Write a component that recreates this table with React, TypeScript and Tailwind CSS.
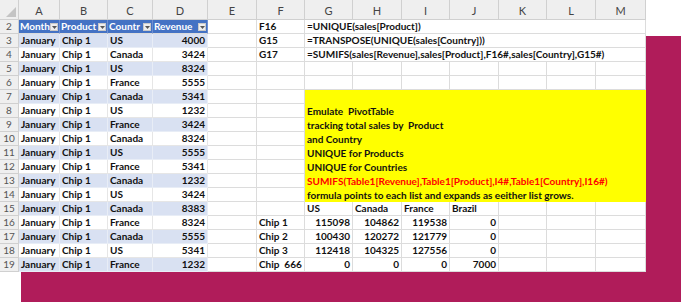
import React from "react";
import clsx from "clsx";

const countries = [
  "US", "Canada", "US", "France", "Canada", "US", "France", "Canada", "US",
  "France", "Canada", "US", "Canada", "France", "Canada", "US", "France",
];
const revenue = [
  4000, 3424, 8324, 5555, 5341, 1232, 3424, 8324, 5555, 5341, 1232, 3424,
  8383, 8324, 5555, 5341, 1232,
];

const letters = ["A", "B", "C", "D", "E", "F", "G", "H", "I", "J", "K", "L", "M"];

const formulas: Record<number, [string, string]> = {
  2: ["F16", "=UNIQUE(sales[Product])"],
  3: ["G15", "=TRANSPOSE(UNIQUE(sales[Country]))"],
  4: ["G17", "=SUMIFS(sales[Revenue],sales[Product],F16#,sales[Country],G15#)"],
};

const notes = [
  "",
  "Emulate  PivotTable",
  "tracking total sales by  Product",
  "and Country",
  "UNIQUE for Products",
  "UNIQUE for Countries",
  "SUMIFS(Table1[Revenue],Table1[Product],I4#,Table1[Country],I16#)",
  "formula points to each list and expands as eeither list grows.",
];

const pivot: Record<number, string[]> = {
  15: ["", "US", "Canada", "France", "Brazil", "", "", ""],
  16: ["Chip 1", "115098", "104862", "119538", "0", "", "", ""],
  17: ["Chip 2", "100430", "120272", "121779", "0", "", "", ""],
  18: ["Chip 3", "112418", "104325", "127556", "0", "", "", ""],
  19: ["Chip  666", "0", "0", "0", "7000", "", "", ""],
};

const Cell: React.FC<{ className?: string; right?: boolean; children?: React.ReactNode }> = ({
  className,
  right,
  children,
}) => (
  <div
    className={clsx(
      "flex items-end overflow-hidden whitespace-pre border-b border-r border-[#dcdcdc] px-[2px] pb-[1px] text-[10px] leading-[12px] font-bold text-[#111]",
      right && "justify-end",
      className
    )}
  >
    {children}
  </div>
);

const FilterButton = () => (
  <span className="mb-[1px] flex h-[8px] w-[8px] shrink-0 items-center justify-center border border-[#c9c9c9] bg-[#eeeeee]">
    <svg width="5" height="3" viewBox="0 0 5 3">
      <path d="M0 0h5L2.5 3z" fill="#555" />
    </svg>
  </span>
);

const RowHeader: React.FC<{ n: number }> = ({ n }) => (
  <div className="flex items-end justify-center border-b border-r border-[#d0d0d0] bg-[#efefef] pb-[1px] text-[10px] leading-[12px] text-[#555]">
    {n}
  </div>
);

const SheetRow: React.FC<{ n: number }> = ({ n }) => {
  const i = n - 3;
  const band = n % 2 === 1 ? "bg-[#d9e1f2] border-[#e8edf6]" : "bg-white border-[#e6e6e6]";
  const cells: React.ReactNode[] = [<RowHeader key="h" n={n} />];

  if (n === 2) {
    // column C is too narrow in the sheet, so Excel shows it cut short
    ["Month", "Product", "Countr", "Revenue"].map((t) =>
      cells.push(
        <Cell
          key={t}
          className="gap-[1px] bg-[#4472c4] border-[#4472c4] border-r-[#6f8fd0] pl-[1px] pr-[1px] text-white"
        >
          <span className="min-w-0 flex-1">{t}</span>
          <FilterButton />
        </Cell>
      )
    );
  } else {
    cells.push(
      <Cell key="a" className={band}>January</Cell>,
      <Cell key="b" className={band}>Chip 1</Cell>,
      <Cell key="c" className={band}>{countries[i]}</Cell>,
      <Cell key="d" className={band} right>{revenue[i]}</Cell>
    );
  }

  cells.push(<Cell key="e" />);

  if (formulas[n]) {
    cells.push(
      <Cell key="f">{formulas[n][0]}</Cell>,
      <Cell key="g" className="col-span-7">{formulas[n][1]}</Cell>
    );
  } else if (n === 5 || n === 6) {
    cells.push(<Cell key="f" />);
    for (let c = 0; c < 7; c++) cells.push(<Cell key={"x" + c} />);
  } else if (n >= 7 && n <= 14) {
    cells.push(<Cell key="f" />);
    if (n === 7) {
      cells.push(
        <div key="note" className="col-span-7 row-span-8 flex flex-col bg-[#ffff00] pl-[2px]">
          {notes.map((line, k) => (
            <div
              key={k}
              className={clsx(
                "flex h-[14px] items-end whitespace-pre pb-[1px] text-[10px] leading-[12px] font-bold",
                k === 6 ? "text-[#ff0000]" : "text-[#111]"
              )}
            >
              {line}
            </div>
          ))}
        </div>
      );
    }
  } else if (pivot[n]) {
    pivot[n].map((t, k) =>
      cells.push(
        <Cell key={"p" + k} right={n > 15 && k > 0}>
          {t}
        </Cell>
      )
    );
  }

  return <>{cells}</>;
};

export default function App() {
  const rows = Array.from({ length: 18 }, (_, k) => k + 2);

  return (
    <div className="grid h-[302px] w-[681px] overflow-hidden bg-white font-['Lato','Liberation_Sans',sans-serif]">
      <div className="col-start-1 row-start-1 ml-[21px] mt-[36px] bg-[#b01c5a]" />
      <div className="col-start-1 row-start-1 grid h-[272px] w-[646px] self-start bg-white grid-cols-[19px_41px_48px_45px_55px_49px_48px_48px_49px_48px_49px_48px_49px_50px] grid-rows-[20px_repeat(18,14px)]">
        <div className="flex items-end justify-end border-b border-r border-[#d0d0d0] bg-[#efefef] p-[2px]">
          <svg width="10" height="10" viewBox="0 0 10 10">
            <path d="M10 0v10H0z" fill="#c4c4c4" />
          </svg>
        </div>
        {letters.map((l) => (
          <div
            key={l}
            className="flex items-end justify-center border-b border-r border-[#d0d0d0] bg-[#efefef] pb-[2px] text-[11px] leading-[12px] text-[#444]"
          >
            {l}
          </div>
        ))}
        {rows.map((n) => (
          <SheetRow key={n} n={n} />
        ))}
      </div>
    </div>
  );
}
